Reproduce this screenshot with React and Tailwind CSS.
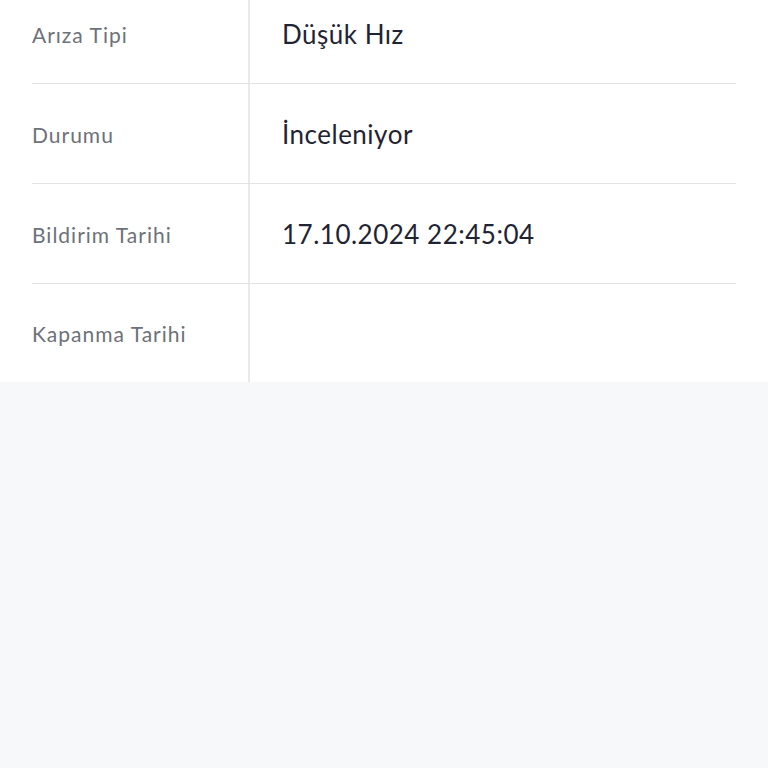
export default function App() {
  const rows = [
    { label: "Arıza Tipi", value: "Düşük Hız" },
    { label: "Durumu", value: "İnceleniyor" },
    { label: "Bildirim Tarihi", value: "17.10.2024 22:45:04" },
    { label: "Kapanma Tarihi", value: "" },
  ];
  return (
    <div className="min-h-screen bg-[#f7f8fa] overflow-hidden" style={{ fontFamily: "Lato, 'Noto Sans', sans-serif" }}>
      <div className="bg-white px-8 -mt-[16px]">
        {rows.map((r, i) => (
          <div
            key={r.label}
            className={`flex ${i < rows.length - 1 ? "h-[100px] border-b border-[#e2e3e6]" : "h-[98px]"}`}
          >
            <div className="w-[218px] shrink-0 border-r-2 border-[#e8e9ec] flex items-center pt-[2px] text-[21px] tracking-[1px] text-[#6d7178]">
              {r.label}
            </div>
            <div className="flex-1 flex items-center pl-[32px] pt-[2px] text-[26px] tracking-[0.5px] text-[#1f2434]">
              {r.value}
            </div>
          </div>
        ))}
      </div>
    </div>
  );
}
